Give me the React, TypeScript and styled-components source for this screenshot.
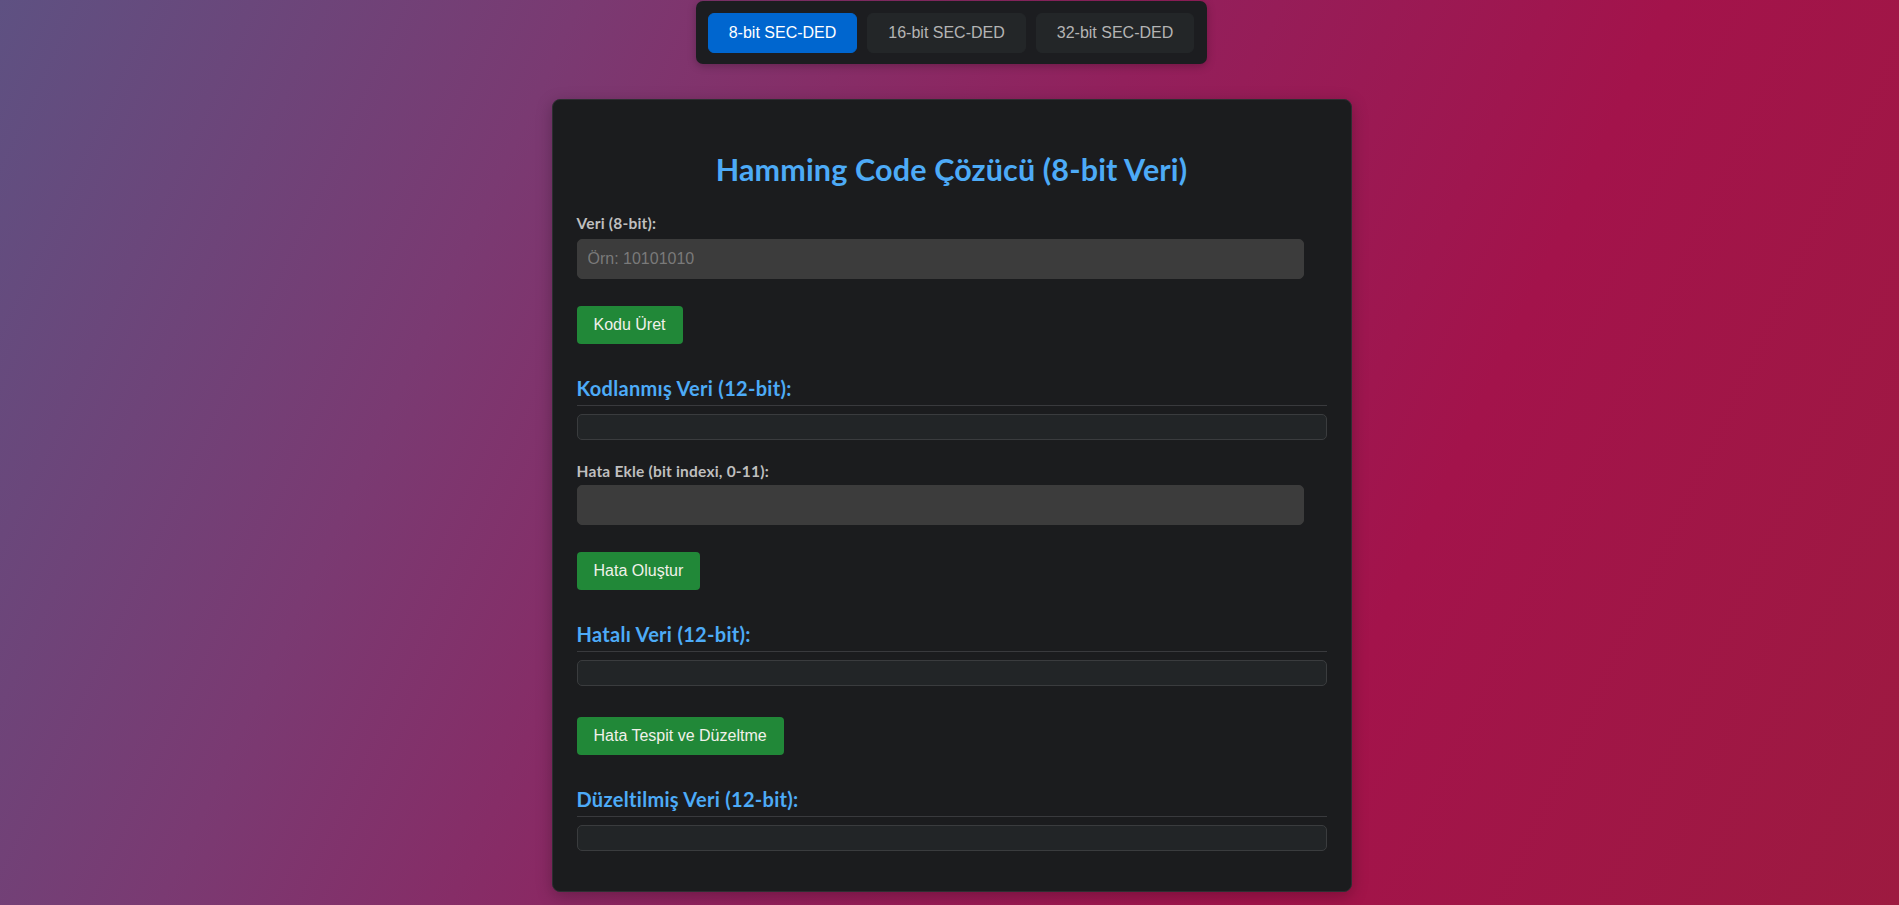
import React, { useState } from "react";
import styled, { createGlobalStyle } from "styled-components";

const GlobalStyle = createGlobalStyle`
  html, body {
    margin: 0;
    padding: 0;
  }
  body {
    min-height: 100vh;
    font-family: "Lato", "Noto Sans", sans-serif;
    background: linear-gradient(115deg, #5e5182 0%, #7a3a72 25%, #92205c 50%, #a3134b 72%, #9d1a40 100%);
    background-attachment: fixed;
  }
  * { box-sizing: border-box; }
`;

const Page = styled.div`
  display: flex;
  flex-direction: column;
  align-items: center;
  padding: 1px 0 12px 4px;
`;

const TabBar = styled.nav`
  display: flex;
  gap: 10px;
  padding: 12px 13px 11px 12px;
  background: #1c1d20;
  border-radius: 7px;
  box-shadow: 0 2px 8px rgba(0, 0, 0, 0.25);
`;

const Tab = styled.button<{ $active?: boolean }>`
  height: 40px;
  padding: 0 20px;
  border: 1px solid ${(p) => (p.$active ? "#0066cf" : "#232628")};
  border-radius: 6px;
  background: ${(p) => (p.$active ? "#0066cf" : "#232628")};
  color: ${(p) => (p.$active ? "#ffffff" : "#b4b4b4")};
  font-family: "Liberation Sans", Arial, sans-serif;
  font-size: 16px;
  cursor: pointer;
`;

const Card = styled.main`
  width: 800px;
  margin-top: 35px;
  padding: 24px 24px 24px;
  background: #1b1c1e;
  border: 1px solid #2d2e31;
  border-radius: 8px;
  box-shadow: 0 4px 16px rgba(0, 0, 0, 0.25);
  display: flex;
  flex-direction: column;
  align-items: flex-start;
`;

const Title = styled.h1`
  align-self: stretch;
  margin: 27px 0 0;
  font-size: 30.5px;
  line-height: 36px;
  letter-spacing: 0.15px;
  font-weight: 700;
  text-align: center;
  color: #4dabf7;
`;

const Label = styled.label<{ $top: number }>`
  display: block;
  margin-top: ${(p) => p.$top}px;
  font-size: 15.5px;
  line-height: 18px;
  letter-spacing: 0.2px;
  font-weight: 700;
  color: #bfbfbf;
`;

const TextInput = styled.input<{ $top: number }>`
  width: 97%;
  height: 40px;
  margin-top: ${(p) => p.$top}px;
  padding: 0 10px;
  border: 1px solid #3c3c3c;
  border-radius: 5px;
  background: #3c3c3c;
  color: #e6e6e6;
  font-family: "Liberation Sans", Arial, sans-serif;
  font-size: 16px;
  outline: none;
  &::placeholder {
    color: #7a7a7a;
  }
`;

const ActionButton = styled.button<{ $top: number }>`
  height: 38px;
  margin-top: ${(p) => p.$top}px;
  padding: 0 17px;
  border: none;
  border-radius: 4px;
  background: #218838;
  color: #f1f1ea;
  font-family: "Liberation Sans", Arial, sans-serif;
  font-size: 16px;
  cursor: pointer;
`;

const SectionTitle = styled.h3<{ $top: number }>`
  align-self: stretch;
  margin: ${(p) => p.$top}px 0 0;
  padding-bottom: 5px;
  border-bottom: 1px solid #393a3d;
  font-size: 20px;
  line-height: 23px;
  letter-spacing: 0.3px;
  font-weight: 700;
  color: #4dabf7;
`;

const Output = styled.div<{ $bottom?: number }>`
  align-self: stretch;
  height: 26px;
  margin-top: 8px;
  margin-bottom: ${(p) => p.$bottom ?? 0}px;
  padding: 0 12px;
  border: 1px solid #3a3c3e;
  border-radius: 5px;
  background: #222527;
  color: #e6e6e6;
  font-family: "Liberation Mono", monospace;
  font-size: 15px;
  line-height: 24px;
`;

const tabs = ["8-bit SEC-DED", "16-bit SEC-DED", "32-bit SEC-DED"];

export default function App() {
  const [active, setActive] = useState(0);
  const [data, setData] = useState("");
  const [errIndex, setErrIndex] = useState("");

  return (
    <>
      <GlobalStyle />
      <Page>
        <TabBar>
          {tabs.map((t, i) => (
            <Tab key={t} $active={i === active} onClick={() => setActive(i)}>
              {t}
            </Tab>
          ))}
        </TabBar>
        <Card>
          <Title>Hamming Code Çözücü (8-bit Veri)</Title>

          <Label $top={27} htmlFor="veri">Veri (8-bit):</Label>
          <TextInput
            $top={7}
            id="veri"
            placeholder="Örn: 10101010"
            value={data}
            onChange={(e) => setData(e.target.value)}
          />
          <ActionButton $top={27}>Kodu Üret</ActionButton>

          <SectionTitle $top={33}>Kodlanmış Veri (12-bit):</SectionTitle>
          <Output />

          <Label $top={22} htmlFor="hata">Hata Ekle (bit indexi, 0-11):</Label>
          <TextInput
            $top={5}
            id="hata"
            value={errIndex}
            onChange={(e) => setErrIndex(e.target.value)}
          />
          <ActionButton $top={27}>Hata Oluştur</ActionButton>

          <SectionTitle $top={33}>Hatalı Veri (12-bit):</SectionTitle>
          <Output />

          <ActionButton $top={31}>Hata Tespit ve Düzeltme</ActionButton>

          <SectionTitle $top={33}>Düzeltilmiş Veri (12-bit):</SectionTitle>
          <Output $bottom={16} />
        </Card>
      </Page>
    </>
  );
}
